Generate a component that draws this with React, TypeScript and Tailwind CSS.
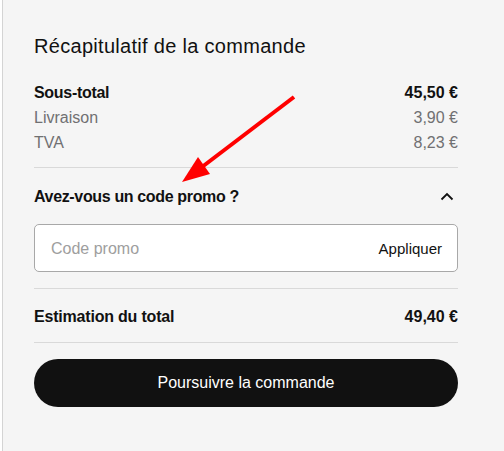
import React from "react";

export default function App() {
  return (
    <div
      className="relative w-[504px] h-[451px] overflow-hidden bg-white text-[#111111]"
      style={{ fontFamily: '"Liberation Sans", Arial, sans-serif' }}
    >
      <div className="ml-[2px] h-full border-l border-[#d4d4d4] bg-[#f5f5f5]">
        <div className="ml-[31px] w-[424px] pt-[32px]">
          <h2 className="text-[20px] leading-[28px] font-normal tracking-[0.3px]">Récapitulatif de la commande</h2>
          <div className="mt-[20px] flex flex-col text-[16px] leading-[25px]">
            <div className="flex justify-between font-bold">
              <span className="tracking-[-0.3px]">Sous-total</span>
              <span>45,50 €</span>
            </div>
            <div className="flex justify-between text-[#707072]">
              <span>Livraison</span>
              <span>3,90 €</span>
            </div>
            <div className="flex justify-between text-[#707072]">
              <span>TVA</span>
              <span>8,23 €</span>
            </div>
          </div>
          <div className="mt-[12px] h-px bg-[#d9d9d9]" />
          <div className="pt-[17px] flex items-center justify-between">
            <span className="text-[16px] leading-[24px] font-bold tracking-[-0.35px]">Avez-vous un code promo ?</span>
            <svg width="24" height="24" viewBox="0 0 24 24" className="mr-[-1px]">
              <path d="M6.5 14.5 L12 9 L17.5 14.5" fill="none" stroke="#111111" strokeWidth="1.8" />
            </svg>
          </div>
          <div className="mt-[15px] h-[48px] rounded-[5px] border border-[#a8a8a8] bg-white flex items-center justify-between pl-[16px] pr-[15px] pt-[2px]">
            <span className="text-[16px] text-[#9e9e9e]">Code promo</span>
            <span className="text-[15px] text-[#111111]">Appliquer</span>
          </div>
          <div className="mt-[16px] h-px bg-[#d9d9d9]" />
          <div className="pt-[16px] flex justify-between text-[16px] leading-[24px] font-bold">
            <span className="tracking-[-0.2px]">Estimation du total</span>
            <span>49,40 €</span>
          </div>
          <div className="mt-[13px] h-px bg-[#d9d9d9]" />
          <button className="mt-[16px] w-full h-[48px] rounded-full bg-[#111111] text-white text-[16px] flex items-center justify-center">
            Poursuivre la commande
          </button>
        </div>
      </div>
      <svg className="absolute inset-0 pointer-events-none" width="504" height="451">
        <line x1="294" y1="97" x2="202" y2="167" stroke="#ff0000" strokeWidth="4" />
        <polygon points="182,182 198,157 210,174" fill="#ff0000" />
      </svg>
    </div>
  );
}
